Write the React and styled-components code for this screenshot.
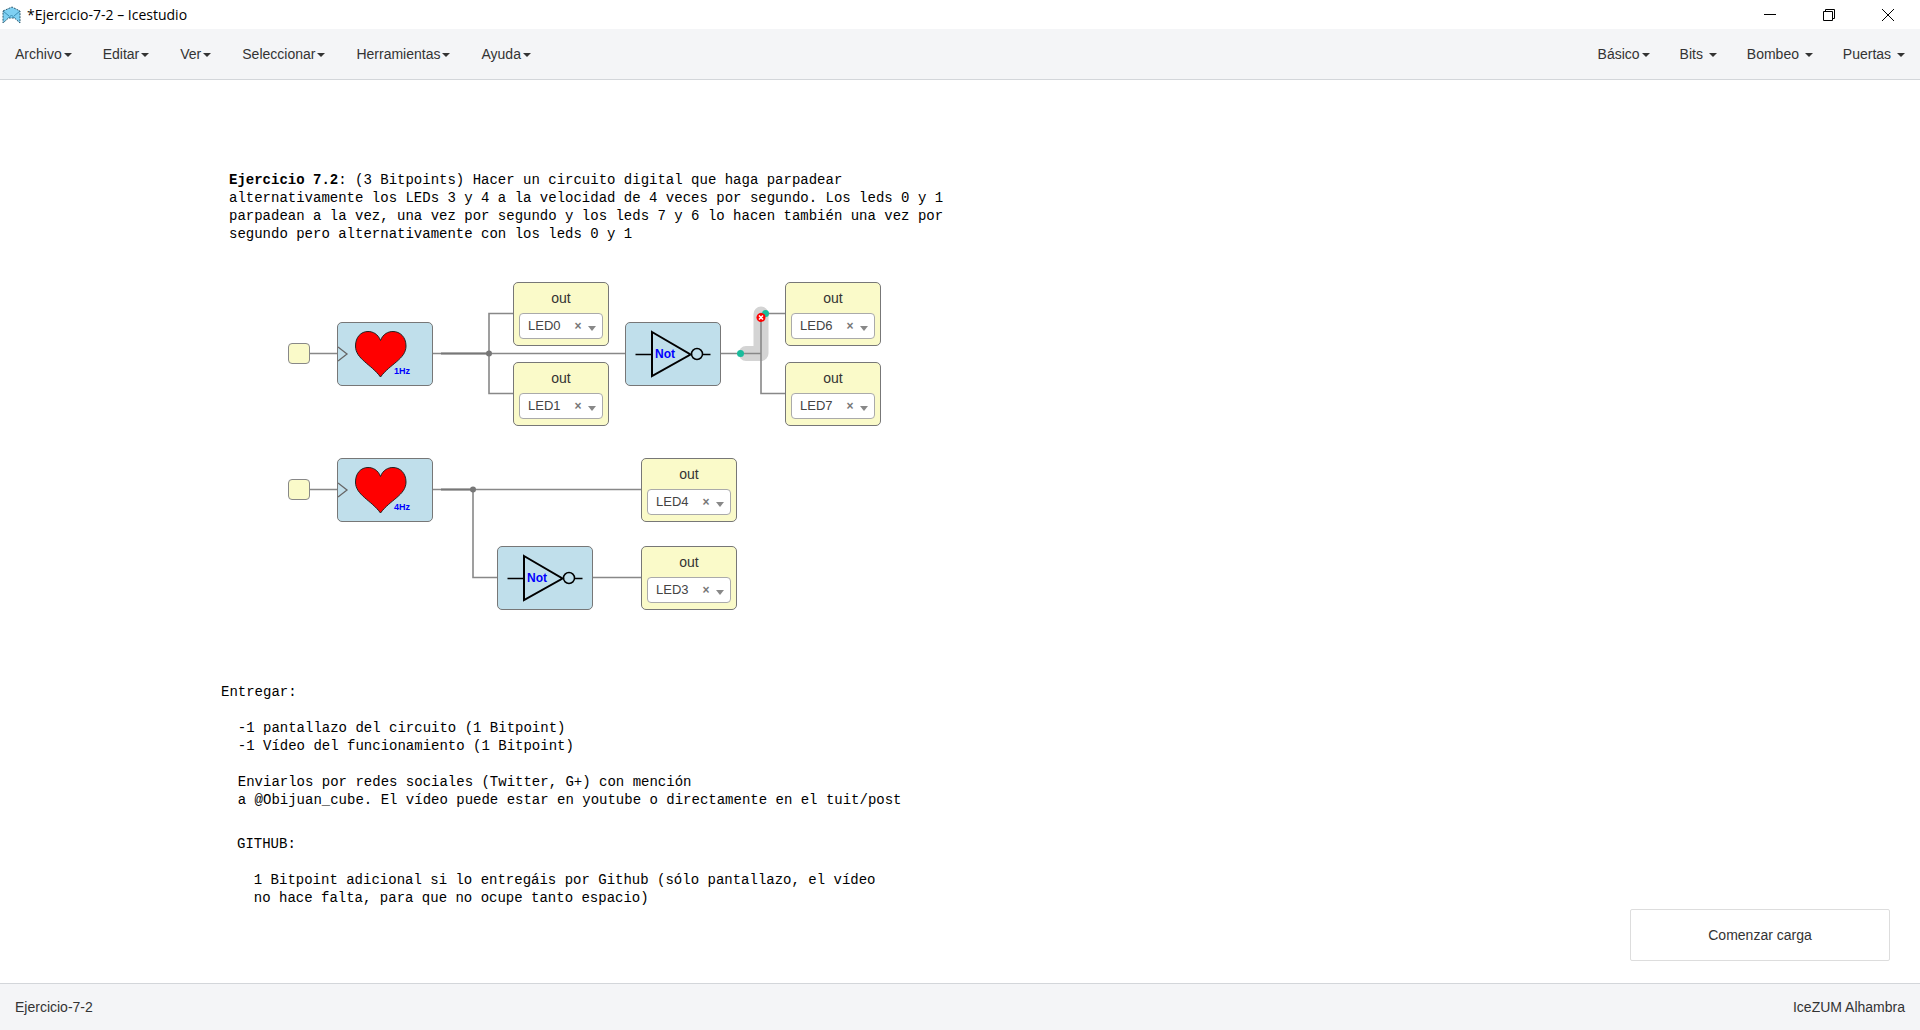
import React from "react";
import styled, { createGlobalStyle, css } from "styled-components";

const GlobalStyle = createGlobalStyle`
  *, *::before, *::after { box-sizing: border-box; }
  html, body { margin: 0; }
  body {
    background: #fff;
    color: #333;
    font-family: "Liberation Sans", Arial, sans-serif;
    font-size: 14px;
    line-height: 20px;
  }
  button, select { font: inherit; color: inherit; }
`;

const Window = styled.div`
  display: flex;
  flex-direction: column;
  min-height: 100vh;
`;

const TitleBar = styled.header`
  display: flex;
  align-items: center;
  gap: 5px;
  height: 29px;
  padding: 0 5px 0 2px;
`;

const Title = styled.h1`
  flex: 1;
  margin: 0;
  color: #000;
  font: 400 14px/20px "Open Sans", "Noto Sans", sans-serif;
`;

const WindowButton = styled.button`
  display: flex;
  align-items: center;
  justify-content: center;
  width: 54px;
  height: 29px;
  padding: 0;
  border: 0;
  background: none;
`;

const NavBar = styled.nav`
  display: flex;
  justify-content: space-between;
  background: #f4f5f7;
  border-bottom: 1px solid #d3d6da;
`;

const MenuList = styled.ul`
  display: flex;
  gap: ${(p) => p.$gap}px;
  margin: 0;
  padding: 0;
  list-style: none;
`;

const MenuLink = styled.a`
  display: block;
  padding: 15px;
  color: #333;
  text-decoration: none;
  white-space: pre;
`;

const Caret = styled.span`
  display: inline-block;
  margin-left: 2px;
  vertical-align: middle;
  border-top: 4px solid;
  border-right: 4px solid transparent;
  border-left: 4px solid transparent;
`;

const Canvas = styled.main`
  position: relative;
  flex: 1;
  overflow: hidden;
`;

const Wires = styled.svg`
  position: absolute;
  top: 0;
  left: 0;
  width: 100%;
  height: 100%;
`;

const placed = css`
  position: absolute;
  left: ${(p) => p.$x}px;
  top: ${(p) => p.$y}px;
`;

const Note = styled.div`
  ${placed}
  color: #000;
  font: 14px/18px "Liberation Mono", "Courier New", monospace;
  white-space: pre;
`;

const NoteLine = styled.p`
  margin: 0;
`;

const Block = styled.div`
  ${placed}
  width: 96px;
  height: 64px;
  border: 1px solid #777;
  border-radius: 5px;
  background: ${(p) => (p.$output ? "#fafac9" : "#c0dfeb")};
`;

const Pin = styled.div`
  ${placed}
  width: 22px;
  height: 21px;
  border: 1px solid #888;
  border-radius: 4px;
  background: #fafac9;
`;

const OutputBlock = styled(Block)`
  display: flex;
  flex-direction: column;
  gap: 5px;
  padding: 5px;
`;

const OutputLabel = styled.label`
  text-align: center;
`;

const Picker = styled.div`
  display: flex;
  align-items: center;
  height: 26px;
  padding: 0 6px 0 8px;
  border: 1px solid #aaa;
  border-radius: 4px;
  background: #fff;
`;

const PinSelect = styled.select`
  flex: 1;
  min-width: 0;
  padding: 0;
  border: 0;
  appearance: none;
  background: none;
  color: #444;
  font-size: 13px;
  line-height: 20px;
`;

const ClearButton = styled.button`
  width: 14px;
  padding: 0;
  border: 0;
  background: none;
  color: #777;
  font-size: 12px;
  font-weight: 700;
  line-height: 20px;
`;

const Glyph = styled.svg`
  display: block;
`;

const ArrowGlyph = styled(Glyph)`
  margin: 4px 0 0 3px;
`;

const Toast = styled.div`
  position: absolute;
  right: 30px;
  bottom: 22px;
  width: 260px;
  padding: 15px;
  border: 1px solid #ddd;
  border-radius: 2px;
  background: #fff;
  text-align: center;
`;

const StatusBar = styled.footer`
  display: flex;
  justify-content: space-between;
  padding: 13px 15px;
  background: #f4f5f7;
  border-top: 1px solid #d3d6da;
`;

const leftMenus = ["Archivo", "Editar", "Ver", "Seleccionar", "Herramientas", "Ayuda"];
const rightMenus = ["Básico", "Bits ", "Bombeo ", "Puertas "];

const outputs = [
  { pin: "LED0", x: 513, y: 202 },
  { pin: "LED1", x: 513, y: 282 },
  { pin: "LED6", x: 785, y: 202 },
  { pin: "LED7", x: 785, y: 282 },
  { pin: "LED4", x: 641, y: 378 },
  { pin: "LED3", x: 641, y: 466 },
];

const Menus = ({ items, gap = 0 }) => (
  <MenuList $gap={gap}>
    {items.map((item) => (
      <li key={item}>
        <MenuLink href="#">{item}<Caret /></MenuLink>
      </li>
    ))}
  </MenuList>
);

const Logo = () => (
  <Glyph width="20" height="18" viewBox="0 0 20 18" aria-hidden="true">
    <path d="M1 5 L10 1 L18 5 V17 L12.500 12 H6.500 L1 17 Z" fill="#7fd0f2" />
    <path d="M1 5 L7 10 M18 5 L12 10 M6.500 12 L9.500 9 L12.500 12" fill="none" stroke="#3d8fb5" />
    <path d="M1 5 L10 1 L18 5 V17 L12.500 12 H6.500 L1 17 Z" fill="none" stroke="#2d5a70" strokeDasharray="2 1" />
  </Glyph>
);

const Heart = ({ x, y, rate }) => (
  <Block $x={x} $y={y}>
    <Glyph width="94" height="62" viewBox="1 1 94 62" role="img" aria-label={`Corazón ${rate}`}>
      <path d="M1 25 L10 32 L1 39" fill="none" stroke="#666" strokeWidth="1.300" />
      <path
        d="M43.500 18.500 C41 12 36 9.500 31 9.500 C24 9.500 18.500 15 18.500 24 C18.500 37 34 42 43.500 55 C53 42 69 37 69 24 C69 15 63 9.500 56 9.500 C51 9.500 46 12 43.500 18.500 Z"
        fill="#f00"
        stroke="#222"
      />
      <text x="57" y="52" fill="#00f" fontSize="9" fontWeight="700">{rate}</text>
    </Glyph>
  </Block>
);

const NotGate = ({ x, y }) => (
  <Block $x={x} $y={y}>
    <Glyph width="94" height="62" viewBox="1 1 94 62" role="img" aria-label="Not">
      <g fill="none" stroke="#000">
        <path d="M10.500 32.500 H27 M78 32.500 H85.500" strokeWidth="1.300" />
        <path d="M27 10 L65.500 32.500 L27 54 Z" strokeWidth="2" />
        <circle cx="72" cy="32" r="5.500" strokeWidth="1.500" />
      </g>
      <text x="30" y="36" fill="#00f" fontSize="12" fontWeight="700">Not</text>
    </Glyph>
  </Block>
);

const Output = ({ pin, x, y }) => (
  <OutputBlock $output $x={x} $y={y}>
    <OutputLabel htmlFor={pin}>out</OutputLabel>
    <Picker>
      <PinSelect id={pin} defaultValue={pin}>
        {outputs.map((o) => <option key={o.pin}>{o.pin}</option>)}
      </PinSelect>
      <ClearButton type="button" aria-label={`Quitar ${pin}`}>×</ClearButton>
      <ArrowGlyph width="8" height="5" aria-hidden="true">
        <path d="M0 0 H8 L4 5 Z" fill="#888" />
      </ArrowGlyph>
    </Picker>
  </OutputBlock>
);

export default function App() {
  return (
    <>
      <GlobalStyle />
      <Window>
        <TitleBar>
          <Logo />
          <Title>*Ejercicio-7-2 – Icestudio</Title>
          <WindowButton type="button" aria-label="Minimizar">
            <Glyph width="12" height="12"><path d="M0 5.500 H12" stroke="#000" /></Glyph>
          </WindowButton>
          <WindowButton type="button" aria-label="Restaurar">
            <Glyph width="12" height="12">
              <path d="M.5 2.500 H9.500 V11.500 H.5 Z M2.500 2.500 V.5 H11.500 V9.500 H9.500" fill="none" stroke="#000" />
            </Glyph>
          </WindowButton>
          <WindowButton type="button" aria-label="Cerrar">
            <Glyph width="12" height="12"><path d="M0 0 L12 12 M12 0 L0 12" stroke="#000" /></Glyph>
          </WindowButton>
        </TitleBar>
        <NavBar>
          <Menus items={leftMenus} gap={1} />
          <Menus items={rightMenus} />
        </NavBar>
        <Canvas>
          <Note $x={229} $y={91}>
            <NoteLine><b>Ejercicio 7.2</b>: (3 Bitpoints) Hacer un circuito digital que haga parpadear</NoteLine>
            <NoteLine>alternativamente los LEDs 3 y 4 a la velocidad de 4 veces por segundo. Los leds 0 y 1</NoteLine>
            <NoteLine>parpadean a la vez, una vez por segundo y los leds 7 y 6 lo hacen también una vez por</NoteLine>
            <NoteLine>segundo pero alternativamente con los leds 0 y 1</NoteLine>
          </Note>

          <Wires aria-hidden="true">
            <path d="M746 273.500 H761 V234" fill="none" stroke="#d4d4d4" strokeWidth="15" strokeLinecap="round" strokeLinejoin="round" />
            <g fill="none" stroke="#888" strokeWidth="1.600">
              <path d="M310 273.500 H337 M433 273.500 H625" />
              <path d="M513 233.500 H489 V313.500 H513" />
              <path d="M721 273.500 H761 M785 233.500 H761 V313.500 H785" />
              <path d="M310 409.500 H337 M433 409.500 H641" />
              <path d="M473 409.500 V497.500 H497 M593 497.500 H641" />
              <path d="M441 273.500 H489 M441 409.500 H473" stroke="#777" strokeWidth="2" />
            </g>
            <g fill="#777">
              <circle cx="489" cy="273.500" r="3" />
              <circle cx="473" cy="409.500" r="3" />
            </g>
            <g fill="#1abc9c">
              <circle cx="740.500" cy="273.500" r="3.500" />
              <circle cx="765.500" cy="233.500" r="3.500" />
            </g>
            <circle cx="761" cy="237.500" r="4.500" fill="#f00" />
            <path d="M759 235.500 L763 239.500 M763 235.500 L759 239.500" stroke="#fff" strokeWidth="1.500" />
          </Wires>

          <Pin $x={288} $y={263} />
          <Heart x={337} y={242} rate="1Hz" />
          <NotGate x={625} y={242} />
          <Pin $x={288} $y={399} />
          <Heart x={337} y={378} rate="4Hz" />
          <NotGate x={497} y={466} />
          {outputs.map((o) => <Output key={o.pin} {...o} />)}

          <Note $x={221} $y={603}>{`Entregar:

  -1 pantallazo del circuito (1 Bitpoint)
  -1 Vídeo del funcionamiento (1 Bitpoint)

  Enviarlos por redes sociales (Twitter, G+) con mención
  a @Obijuan_cube. El vídeo puede estar en youtube o directamente en el tuit/post`}</Note>
          <Note $x={237} $y={755}>{`GITHUB:

  1 Bitpoint adicional si lo entregáis por Github (sólo pantallazo, el vídeo
  no hace falta, para que no ocupe tanto espacio)`}</Note>

          <Toast role="status">Comenzar carga</Toast>
        </Canvas>
        <StatusBar>
          <span>Ejercicio-7-2</span>
          <span>IceZUM Alhambra</span>
        </StatusBar>
      </Window>
    </>
  );
}
